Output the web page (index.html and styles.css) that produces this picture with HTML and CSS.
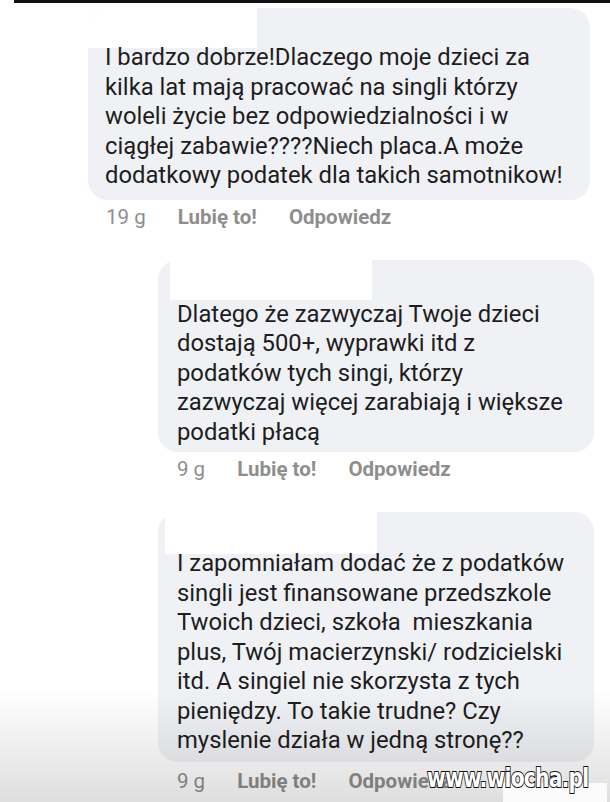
FILE: index.html
```html
<!DOCTYPE html>
<html lang="pl">
<head>
    <meta charset="UTF-8">
    <meta name="viewport" content="width=device-width, initial-scale=1.0">
    <title>Komentarze</title>
    <link rel="stylesheet" href="styles.css">
</head>
<body>
    <div class="top-bar"></div>

    <main class="thread">
        <!-- Main comment -->
        <div class="comment comment-main">
            <div class="bubble bubble-first">
                <div class="name-cover cover-first"></div>
                <p>I bardzo dobrze!Dlaczego moje dzieci za kilka lat mają pracować na singli którzy woleli życie bez odpowiedzialności i w ciągłej zabawie????Niech placa.A może dodatkowy podatek dla takich samotnikow!</p>
            </div>
            <div class="meta">
                <span class="time">19 g</span>
                <span class="action">Lubię to!</span>
                <span class="action">Odpowiedz</span>
            </div>
        </div>

        <!-- Reply 1 -->
        <div class="comment comment-reply">
            <div class="bubble bubble-second">
                <div class="name-cover"></div>
                <p>Dlatego że zazwyczaj Twoje dzieci dostają 500+, wyprawki itd z podatków tych singi, którzy zazwyczaj więcej zarabiają i większe podatki płacą</p>
            </div>
            <div class="meta">
                <span class="time">9 g</span>
                <span class="action">Lubię to!</span>
                <span class="action">Odpowiedz</span>
            </div>
        </div>

        <!-- Reply 2 -->
        <div class="comment comment-reply">
            <div class="bubble bubble-third">
                <div class="name-cover cover-third"></div>
                <p>I zapomniałam dodać że z podatków singli jest finansowane przedszkole Twoich dzieci, szkoła&nbsp; mieszkania plus, Twój macierzynski/ rodzicielski itd. A singiel nie skorzysta z tych pieniędzy. To takie trudne? Czy myslenie działa w jedną stronę??</p>
            </div>
            <div class="meta">
                <span class="time">9 g</span>
                <span class="action">Lubię to!</span>
                <span class="action">Odpowiedz</span>
            </div>
        </div>
    </main>

    <div class="bottom-shade"></div>
    <div class="corner-patch"></div>
    <div class="watermark">www.wiocha.pl</div>
</body>
</html>
```

FILE: styles.css
```css
/* Basic reset */
* {
    margin: 0;
    padding: 0;
    box-sizing: border-box;
}

body {
    font-family: Roboto, 'Liberation Sans', Arial, sans-serif;
    background-color: #ffffff;
    color: #1d1d1f;
    width: 610px;
    height: 802px;
    overflow: hidden;
    position: relative;
}

.top-bar {
    height: 3px;
    margin-left: 14px;
    background-color: #111;
}

.thread {
    display: flex;
    flex-direction: column;
    gap: 32px;
    padding-top: 5px;
}

.comment-main {
    margin-left: 88px;
    width: 502px;
}

.comment-reply {
    margin-left: 158px;
    width: 436px;
}

.bubble {
    position: relative;
    background-color: #f0f1f4;
    border-radius: 20px;
    font-size: 23.8px;
    line-height: 29.5px;
}

.bubble p {
    position: relative;
}

.bubble-first {
    padding: 35px 15px 9px 17px;
}

.bubble-second {
    padding: 40px 28px 5px 19px;
}

.bubble-third {
    padding: 37px 28px 6px 19px;
}

/* white patch where the author's name was cut out */
.name-cover {
    position: absolute;
    top: 0;
    left: 12px;
    width: 202px;
    height: 40px;
    background-color: #fff;
}

.cover-first {
    left: 0;
    width: 169px;
    height: 40px;
    border-top-left-radius: 20px;
}

.cover-third {
    left: 7px;
    width: 212px;
    height: 42px;
}

.meta {
    display: flex;
    gap: 32px;
    margin-top: 6px;
    padding-left: 18px;
    font-size: 20.5px;
    line-height: 22px;
    color: #8e8e8e;
}

.comment-reply .meta {
    padding-left: 19px;
}

.comment-reply:last-child .meta {
    margin-top: 8px;
}

.action {
    font-weight: bold;
}

.bottom-shade {
    position: absolute;
    left: 0;
    top: 690px;
    width: 100%;
    height: 112px;
    background: linear-gradient(rgba(0, 0, 0, 0), rgba(0, 0, 0, 0.13));
    pointer-events: none;
}

.corner-patch {
    position: absolute;
    left: 503px;
    top: 783px;
    width: 104px;
    height: 19px;
    background-color: #fbfbfb;
}

.watermark {
    position: absolute;
    left: 427px;
    top: 762px;
    width: 224px;
    font-family: 'DejaVu Sans', sans-serif;
    font-weight: bold;
    font-size: 27px;
    letter-spacing: -1px;
    color: #fff;
    -webkit-text-stroke: 2px #111;
    paint-order: stroke fill;
    transform: scaleX(0.75);
    transform-origin: left center;
    white-space: nowrap;
}
```
